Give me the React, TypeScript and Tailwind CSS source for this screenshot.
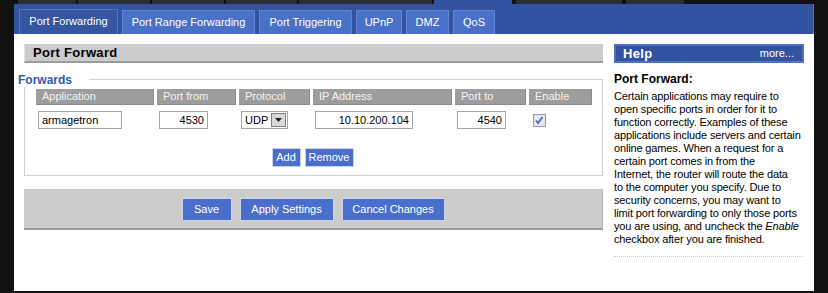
import type { ReactNode } from "react";

const TABS = [
  { label: "Port Forwarding", w: "w-[99px]", active: true },
  { label: "Port Range Forwarding", w: "w-[133px]", active: false },
  { label: "Port Triggering", w: "w-[93px]", active: false },
  { label: "UPnP", w: "w-[46px]", active: false },
  { label: "DMZ", w: "w-[43px]", active: false },
  { label: "QoS", w: "w-[42px]", active: false },
];

const COLUMNS = ["Application", "Port from", "Protocol", "IP Address", "Port to", "Enable"];

function TextBox({ value, w, right }: { value: string; w: string; right?: boolean }) {
  return (
    <div
      className={`${w} h-[18px] border border-[#a5a5a5] bg-white px-[3px] text-[11px] leading-[16px] text-black ${right ? "text-right" : ""}`}
    >
      {value}
    </div>
  );
}

function BlueButton({ children, w, h }: { children: ReactNode; w: string; h: string }) {
  return (
    <button
      className={`${w} ${h} flex items-center justify-center border border-[#c9d3ec] bg-[#4a6fcb] text-[11px] text-white`}
    >
      {children}
    </button>
  );
}

export default function App() {
  return (
    <div
      className="flex h-[293px] w-[828px] flex-col bg-[#111111]"
      style={{ fontFamily: '"Liberation Sans", Arial, sans-serif' }}
    >
      {/* upper tab row, mostly cut off */}
      <div className="flex h-[4px] items-stretch pl-[18px]">
        <div className="w-[58px] bg-[#2e2e2e]" />
        <div className="ml-[2px] w-[72px] bg-[#2e2e2e]" />
        <div className="ml-[2px] w-[72px] bg-[#2e2e2e]" />
        <div className="ml-[2px] w-[71px] bg-[#2e2e2e]" />
        <div className="ml-[2px] w-[133px] bg-[#2e2e2e]" />
        <div className="ml-[2px] w-[78px] bg-[#3353a0]" />
        <div className="ml-[4px] w-[106px] bg-[#2e2e2e]" />
        <div className="ml-[4px] w-[58px] bg-[#2e2e2e]" />
      </div>

      <div className="ml-[14px] flex h-[287px] w-[800px] flex-col bg-white">
        {/* tab band */}
        <div className="flex h-[30px] items-end gap-[4px] border-r border-[#4d72c6] bg-[#3353a0] pl-[5px]">
          {TABS.map((t) => (
            <div
              key={t.label}
              className={`${t.w} flex items-center justify-center border border-b-0 text-[11px] text-white ${
                t.active
                  ? "h-[25px] border-[#5577c4] bg-[#36569f] pb-[2px]"
                  : "h-[24px] border-[#5f86d6] bg-[#4a71c8]"
              }`}
            >
              {t.label}
            </div>
          ))}
        </div>

        <div className="flex gap-[11px] pl-[10px]">
          {/* left column */}
          <div className="flex w-[579px] flex-col pt-[10px]">
            <div className="h-[19px] border-b-2 border-l border-b-[#9c9c9c] border-l-[#e2e2e2] bg-[#cccccc] pl-[8px] text-[13px] font-bold leading-[17px] tracking-[0.3px] text-black">
              Port Forward
            </div>

            <div className="relative mt-[16px] border border-[#cfcfcf] px-[11px] pb-[8px] pt-[9px]">
              <span className="absolute -left-[7px] -top-[7px] bg-white pr-[17px] text-[12px] font-bold leading-[14px] text-[#2f5dac]">
                Forwards
              </span>

              <div className="grid grid-cols-[118px_79px_71px_139px_71px_63px] gap-x-[3px] gap-y-[6px]">
                {COLUMNS.map((c) => (
                  <div
                    key={c}
                    className="h-[16px] border-b border-r border-[#8a8a8a] bg-[#9d9d9d] pl-[6px] text-[11px] leading-[15px] text-[#f4f4f4]"
                  >
                    {c}
                  </div>
                ))}

                <div className="pl-[2px]">
                  <TextBox value="armagetron" w="w-[84px]" />
                </div>
                <div className="pl-[2px]">
                  <TextBox value="4530" w="w-[49px]" right />
                </div>
                <div className="pl-[2px]">
                  <div className="flex h-[18px] w-[47px] items-center border border-[#a5a5a5] bg-white pl-[3px] pr-[1px] text-[11px] text-black">
                    <span className="flex-1">UDP</span>
                    <span className="flex h-[14px] w-[15px] items-center justify-center border border-[#808080] bg-[#d8d8d8]">
                      <svg width="7" height="4" viewBox="0 0 7 4">
                        <path d="M0 0h7L3.5 4z" fill="#222" />
                      </svg>
                    </span>
                  </div>
                </div>
                <div className="pl-[2px]">
                  <TextBox value="10.10.200.104" w="w-[98px]" right />
                </div>
                <div className="pl-[2px]">
                  <TextBox value="4540" w="w-[49px]" right />
                </div>
                <div className="flex items-center pl-[4px]">
                  <svg width="13" height="13" viewBox="0 0 13 13">
                    <rect x="0.5" y="0.5" width="12" height="12" fill="#e6e8f0" stroke="#9a9a9a" />
                    <path d="M3 6.5l2 2.5 4.5-6" fill="none" stroke="#4a68b8" strokeWidth="1.8" />
                  </svg>
                </div>
              </div>

              <div className="mt-[19px] flex justify-center gap-[4px] pr-[2px]">
                <BlueButton w="w-[29px]" h="h-[19px]">Add</BlueButton>
                <BlueButton w="w-[49px]" h="h-[19px]">Remove</BlueButton>
              </div>
            </div>

            <div className="mt-[13px] flex h-[41px] items-center justify-center gap-[8px] border-b-2 border-r border-b-[#9c9c9c] border-r-[#b0b0b0] bg-[#cccccc] pt-[1px]">
              <BlueButton w="w-[50px]" h="h-[23px]">Save</BlueButton>
              <BlueButton w="w-[94px]" h="h-[23px]">Apply Settings</BlueButton>
              <BlueButton w="w-[103px]" h="h-[23px]">Cancel Changes</BlueButton>
            </div>
          </div>

          {/* help column */}
          <div className="flex w-[190px] flex-col pt-[10px]">
            <div className="flex h-[19px] items-center justify-between border-2 border-[#4d72c6] bg-[#3353a0] pl-[7px] pr-[8px] text-white">
              <span className="text-[13px] font-bold tracking-[0.3px]">Help</span>
              <span className="text-[11px]">more...</span>
            </div>
            <h3 className="mt-[9px] text-[12px] font-bold leading-[14px] text-black">Port Forward:</h3>
            <p className="mt-[4px] whitespace-nowrap text-[11px] leading-[13px] tracking-[-0.15px] text-black">
              Certain applications may require to
              <br />
              open specific ports in order for it to
              <br />
              function correctly. Examples of these
              <br />
              applications include servers and certain
              <br />
              online games. When a request for a
              <br />
              certain port comes in from the
              <br />
              Internet, the router will route the data
              <br />
              to the computer you specify. Due to
              <br />
              security concerns, you may want to
              <br />
              limit port forwarding to only those ports
              <br />
              you are using, and uncheck the <i>Enable</i>
              <br />
              checkbox after you are finished.
            </p>
            <div className="mt-[10px] border-t border-dotted border-[#c8c8c8]" />
          </div>
        </div>
      </div>
    </div>
  );
}
